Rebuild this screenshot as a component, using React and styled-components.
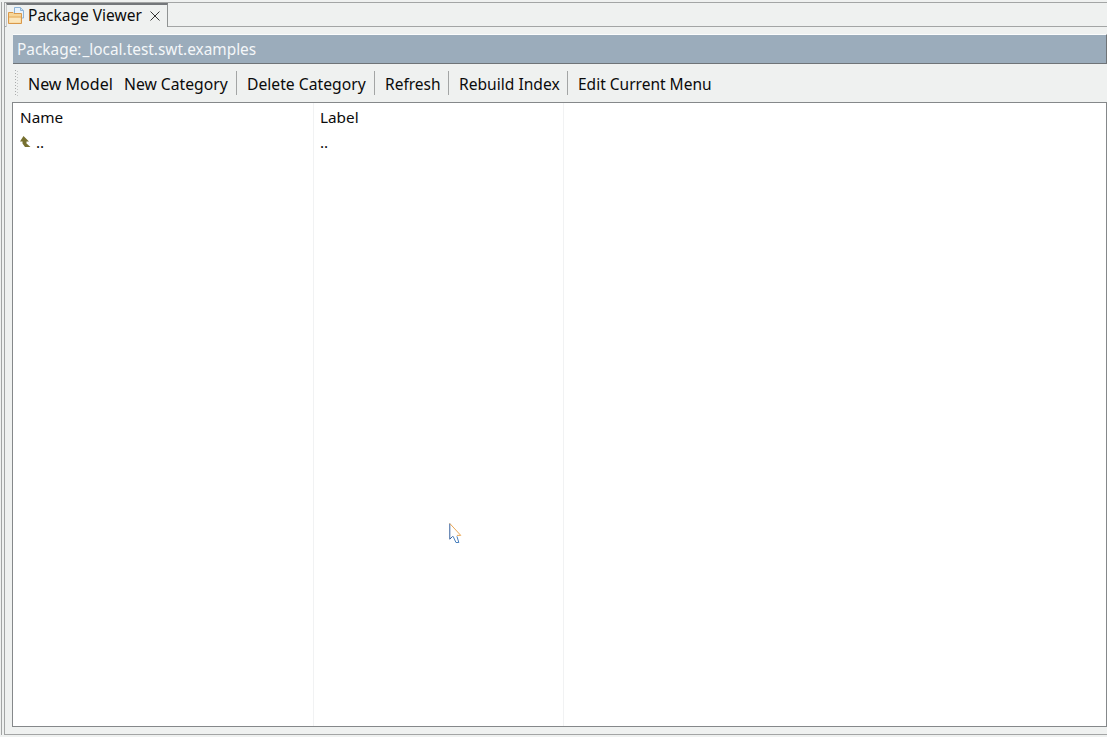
import React from "react";
import styled, { createGlobalStyle } from "styled-components";

const Global = createGlobalStyle`
  html, body { margin: 0; padding: 0; background: #eff1f0; }
  body { font-family: "Noto Sans", "Open Sans", sans-serif; color: #0b0b0b; }
`;

const Page = styled.div`
  position: relative;
  width: 1107px;
  height: 737px;
  overflow: hidden;
  box-sizing: border-box;
  padding: 2px 0 2px 1px;
`;

const Outer = styled.div`
  height: 100%;
  box-sizing: border-box;
  border-left: 1px solid #a3a5a5;
  padding-left: 2px;
`;

const Frame = styled.div`
  height: 100%;
  box-sizing: border-box;
  border-left: 1px solid #a3a5a5;
  border-bottom: 1px solid #a3a5a5;
  display: flex;
  flex-direction: column;
`;

const TabStrip = styled.div`
  height: 25px;
  flex: none;
  display: flex;
  box-sizing: border-box;
  border-top: 1px solid #a3a5a5;
  border-bottom: 1px solid #a3a5a5;
`;

const Tab = styled.div`
  width: 162px;
  height: 24px;
  margin-left: 1px;
  box-sizing: border-box;
  border-top: 2px solid #74777a;
  border-right: 1px solid #909393;
  border-left: 1px solid #c8caca;
  background: #eff1f0;
  display: flex;
  align-items: center;
  padding-left: 1px;
  font-size: 15.5px;
`;

const TabLabel = styled.span`
  margin-left: 4px;
  line-height: 18px;
  margin-top: -3px;
  white-space: nowrap;
`;

const FolderSvg = styled.svg`
  width: 16px;
  height: 17px;
  margin-top: -2px;
  flex: none;
`;

const CloseIcon = styled.svg`
  width: 10px;
  height: 10px;
  margin-left: 8px;
  margin-top: -1px;
  flex: none;
`;

const Body = styled.div`
  flex: 1;
  min-height: 0;
  display: flex;
  flex-direction: column;
  padding: 7px 0 7px 7px;
`;

const Banner = styled.div`
  height: 30px;
  flex: none;
  margin-left: 1px;
  box-sizing: border-box;
  background: #9bacbb;
  border-top: 1px solid #fbfcfc;
  border-bottom: 1px solid #6f7478;
  border-right: 1px solid #6f7478;
  color: #f4f7f9;
  font-size: 15.4px;
  word-spacing: -3px;
  line-height: 30px;
  padding-left: 4px;
`;

const Toolbar = styled.div`
  height: 38px;
  flex: none;
  display: flex;
  align-items: center;
  padding-left: 3px;
`;

const Grip = styled.div`
  width: 3px;
  height: 27px;
  margin-right: 10px;
  background-image:
    repeating-linear-gradient(to bottom, #a9abab 0 1px, transparent 1px 3px),
    repeating-linear-gradient(to bottom, transparent 0 1px, #c4c6c6 1px 2px, transparent 2px 3px);
  background-size: 1px 100%, 1px 100%;
  background-position: 0 0, 2px 0;
  background-repeat: no-repeat;
`;

const ToolButton = styled.div`
  width: ${(p) => p.$width}px;
  box-sizing: border-box;
  flex: none;
  font-size: ${(p) => p.$size}px;
  line-height: 20px;
  margin-top: 2px;
  white-space: nowrap;
  padding-left: ${(p) => p.$left}px;
`;

const ToolSep = styled.div`
  width: 1px;
  height: 24px;
  background: #a3a5a5;
  flex: none;
`;

const Table = styled.div`
  flex: 1;
  min-height: 0;
  box-sizing: border-box;
  border: 1px solid #85888a;
  background: #fff;
  display: grid;
  grid-template-columns: 301px 250px 1fr;
`;

const Column = styled.div`
  box-sizing: border-box;
  border-right: ${(p) => (p.$last ? "0" : "1px solid #f1f2f3")};
  padding-left: ${(p) => p.$pad}px;
  font-size: 15.3px;
`;

const HeaderCell = styled.div`
  height: 28px;
  line-height: 28px;
`;

const RowCell = styled.div`
  height: 24px;
  line-height: 22px;
  display: flex;
  align-items: flex-start;
`;

const UpIcon = styled.svg`
  width: 11px;
  height: 11px;
  margin-right: 5px;
  margin-top: 5px;
  flex: none;
`;

const Cursor = styled.svg`
  position: absolute;
  left: 449px;
  top: 523px;
  width: 13px;
  height: 20px;
`;

const FolderIcon = () => (
  <FolderSvg viewBox="0 0 16 17">
    <path d="M6.5 .5H12.5L15.5 3.5V11H6.5Z" fill="#e8f2fb" stroke="#8db3d6" />
    <path d="M12.5 .8V3.5H15.2" fill="#cfe2f3" stroke="#8db3d6" />
    <path d="M.5 7V5.5H5L6 6.5H13.5V16.5H.5Z" fill="#f7d596" stroke="#d9984a" />
    <path d="M1.5 10.5H12.5V15.5H1.5Z" fill="#fbe6bc" />
    <path d="M1 10H13" stroke="#e3aa5c" />
  </FolderSvg>
);

const items = [
  { t: "New Model", l: 0, w: 96, s: 16 },
  { t: "New Category", l: 0, w: 112, s: 15.7 },
  { t: "Delete Category", l: 10, w: 137, s: 15.7, sep: true },
  { t: "Refresh", l: 10, w: 73, s: 15.5, sep: true },
  { t: "Rebuild Index", l: 10, w: 118, s: 15.6, sep: true },
  { t: "Edit Current Menu", l: 10, w: 150, s: 15.5, sep: true },
];

export default function App() {
  return (
    <Page>
      <Global />
      <Outer>
        <Frame>
          <TabStrip>
            <Tab>
              <FolderIcon />
              <TabLabel>Package Viewer</TabLabel>
              <CloseIcon viewBox="0 0 10 10">
                <path d="M.5 .5L9.5 9.5M9.5 .5L.5 9.5" stroke="#333" strokeWidth="1" fill="none" />
              </CloseIcon>
            </Tab>
          </TabStrip>
          <Body>
            <Banner>Package: _local.test.swt.examples</Banner>
            <Toolbar>
              <Grip />
              {items.map((it) => (
                <React.Fragment key={it.t}>
                  {it.sep && <ToolSep />}
                  <ToolButton $left={it.l} $width={it.w} $size={it.s}>{it.t}</ToolButton>
                </React.Fragment>
              ))}
            </Toolbar>
            <Table>
              <Column $pad={7}>
                <HeaderCell>Name</HeaderCell>
                <RowCell>
                  <UpIcon viewBox="0 0 11 11">
                    <path d="M3.5 0L9 5.5H6.5V7.5L10.5 11H5L2.5 7.5V5.5H0Z" fill="#77702f" />
                  </UpIcon>
                  ..
                </RowCell>
              </Column>
              <Column $pad={6}>
                <HeaderCell>Label</HeaderCell>
                <RowCell>..</RowCell>
              </Column>
              <Column $last $pad={0} />
            </Table>
          </Body>
        </Frame>
      </Outer>
      <Cursor viewBox="0 0 13 21">
        <path d="M.5 .5V17L4 13.5L7 20H10L7.5 13.5H12Z" fill="#fff" />
        <path d="M.5 .5V17L3.5 14" fill="none" stroke="#2b5797" />
        <path d="M.5 .5L12 13H8" fill="none" stroke="#e9a24c" />
        <path d="M4 14L7 20.5H10L8 14" fill="none" stroke="#3d77b8" />
      </Cursor>
    </Page>
  );
}
